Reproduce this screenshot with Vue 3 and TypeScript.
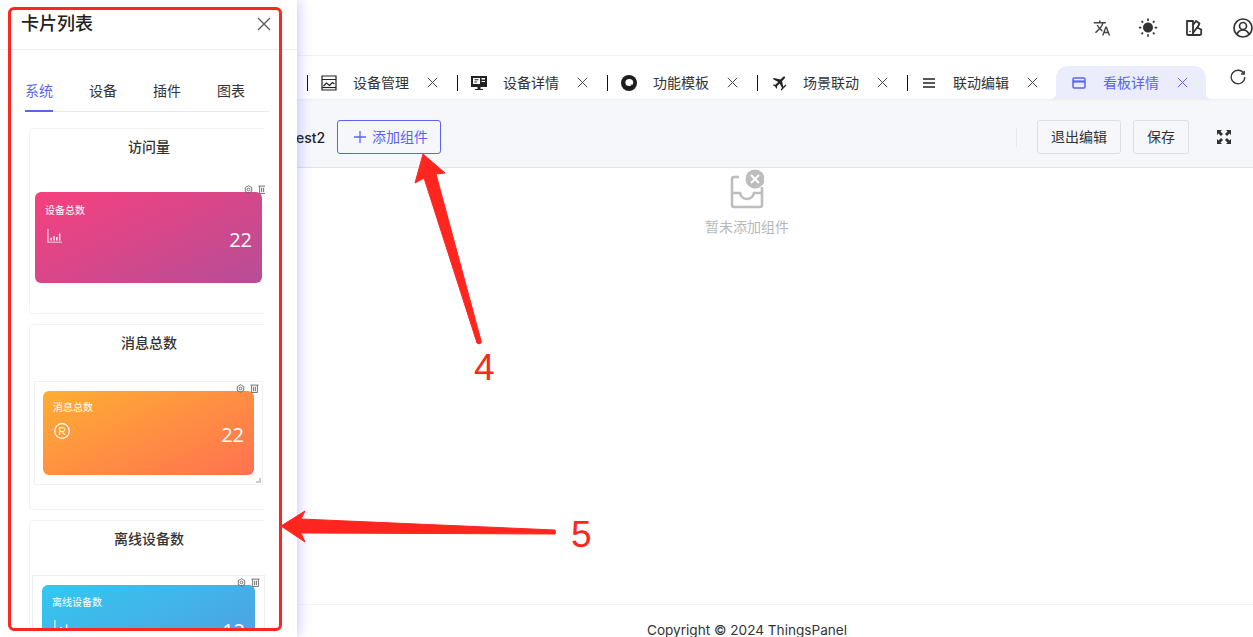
<script setup lang="ts">
interface Tab { name: string; icon: string; active?: boolean }
const tabs: Tab[] = [
  { name: '设备管理', icon: 'chart' },
  { name: '设备详情', icon: 'monitor' },
  { name: '功能模板', icon: 'ring' },
  { name: '场景联动', icon: 'plane' },
  { name: '联动编辑', icon: 'menu' },
  { name: '看板详情', icon: 'card', active: true }
]
const drawerTabs = ['系统', '设备', '插件', '图表']
interface Card { title: string; label: string; value: string; icon: string; kind: string }
const cards: Card[] = [
  { title: '访问量', label: '设备总数', value: '22', icon: 'bars', kind: 'one' },
  { title: '消息总数', label: '消息总数', value: '22', icon: 'reg', kind: 'two' },
  { title: '离线设备数', label: '离线设备数', value: '12', icon: 'bars', kind: 'three' }
]
</script>

<template>
  <div class="page">
    <div class="layout">
      <aside class="side"></aside>
      <main class="main">
        <header class="top">
          <svg class="ti" viewBox="0 0 24 24"><path fill="#444" d="M12.87 15.07l-2.54-2.51.03-.03A17.52 17.52 0 0 0 14.07 6H17V4h-7V2H8v2H1v2h11.17C11.5 7.92 10.44 9.75 9 11.35 8.07 10.32 7.3 9.19 6.69 8h-2c.73 1.63 1.73 3.17 2.98 4.56l-5.09 5.02L4 19l5-5 3.11 3.11.76-2.04zM18.5 10h-2L12 22h2l1.12-3h4.75L21 22h2l-4.5-12zm-2.62 7l1.62-4.33L19.12 17h-3.24z"/></svg>
          <svg class="ti sun" viewBox="0 0 24 24"><path fill="#333" d="M6.76 4.84l-1.8-1.79-1.41 1.41 1.79 1.79 1.42-1.41zM4 10.5H1v2h3v-2zm9-9.95h-2V3.5h2V.55zm7.45 3.91l-1.41-1.41-1.79 1.79 1.41 1.41 1.79-1.79zm-3.21 13.7l1.79 1.8 1.41-1.41-1.8-1.79-1.4 1.4zM20 10.5v2h3v-2h-3zm-8-5c-3.31 0-6 2.69-6 6s2.69 6 6 6 6-2.69 6-6-2.69-6-6-6zm-1 16.95h2V19.5h-2v2.95zm-7.45-3.91l1.41 1.41 1.79-1.8-1.41-1.41-1.79 1.8z"/></svg>
          <svg class="ti" viewBox="0 0 18 18" fill="none" stroke="#333" stroke-width="1.8" stroke-linejoin="round"><path d="M2 2h6v14H3a1 1 0 0 1-1-1z"/><path d="M8 6l3-4 3.5 2.5L12 9.5 M8 16h7a1.2 1.2 0 0 0 1.2-1.2V10.500L12 8.500 L8 14"/><circle cx="5" cy="12.500" r="0.800" fill="#333" stroke="none"/></svg>
          <svg class="ti user" viewBox="0 0 20 20" fill="none" stroke="#333" stroke-width="1.700"><circle cx="10" cy="10" r="9"/><circle cx="10" cy="8" r="3.500"/><path d="M4 16.500c1-3 3.500-4.500 6-4.500s5 1.500 6 4.500"/></svg>
        </header>

        <nav class="tabs">
          <div v-for="t in tabs" :key="t.name" class="tab" :class="{ active: t.active }">
            <span class="tab-icon">
              <svg v-if="t.icon === 'chart'" viewBox="0 0 16 16" fill="none" stroke="#222" stroke-width="1.200"><path d="M1 1h14v14H1z M1 4.500h14"/><path d="M2.500 11l3-3 3 2.500 3-3 2 1.500"/><path d="M1 12.500h14"/></svg>
              <svg v-else-if="t.icon === 'monitor'" viewBox="0 0 16 16"><path fill="#222" d="M0 1h16v11H0z"/><path fill="#fff" d="M2 3h7v6H2z M10.500 3H14v1.500h-3.500z M10.500 6H14v1h-3.500z"/><path fill="#222" d="M3.500 4.200h4v1h-4z M3.500 6.500h2.500v1H3.500z M6.500 12h3v2H12v1H4v-1h2.500z"/></svg>
              <svg v-else-if="t.icon === 'ring'" viewBox="0 0 16 16"><circle cx="8" cy="8" r="8" fill="#1d1d1f"/><ellipse cx="8.300" cy="7.600" rx="3.900" ry="3.500" fill="#fff"/><path d="M9.500 9.500l4.500.5-2 3z" fill="#1d1d1f"/></svg>
              <svg v-else-if="t.icon === 'plane'" viewBox="0 0 16 16"><path fill="#222" transform="translate(-1 -1) scale(.72)" d="M20.560 3.910C21.150 4.500 21.150 5.450 20.560 6.030L16.670 9.920L18.790 19.110L17.380 20.530L13.500 13.100L9.600 17L9.960 19.470L8.890 20.530L7.130 17.350L3.940 15.580L5 14.500L7.500 14.870L11.370 11L3.940 7.090L5.360 5.680L14.550 7.800L18.440 3.910C19 3.330 20 3.330 20.560 3.910Z"/><path d="M10 15l5-5" stroke="#222" stroke-width="1.300"/></svg>
              <svg v-else-if="t.icon === 'menu'" viewBox="0 0 16 16"><path d="M2 4h12M2 8h12M2 12h12" stroke="#222" stroke-width="1.400"/></svg>
              <svg v-else viewBox="0 0 16 16" fill="none" stroke="#5b63f5" stroke-width="1.500"><rect x="2" y="3" width="12" height="10" rx="1.200"/><path d="M2 6.500h12" stroke-width="2.200"/></svg>
            </span>
            <span class="tab-name">{{ t.name }}</span>
            <svg class="tab-x" viewBox="0 0 11 11"><path d="M.8.800l9.400 9.400M10.200.800L.8 10.200" stroke="currentColor" stroke-width="1"/></svg>
          </div>
          <svg class="refresh" viewBox="0 0 16 16" fill="none" stroke="#333" stroke-width="1.300"><path d="M13.800 4.500A6.800 6.800 0 1 0 14.800 8"/><path d="M14.200 1.800v3.200H11" stroke-width="1.300"/></svg>
        </nav>

        <section class="bar">
          <span class="bar-name">Test2</span>
          <button class="btn primary"><svg class="plus" viewBox="0 0 12 12"><path d="M6 0v12M0 6h12" stroke="#5b63f5" stroke-width="1.300"/></svg>添加组件</button>
          <span class="grow"></span>
          <span class="rule"></span>
          <button class="btn exit">退出编辑</button>
          <button class="btn save">保存</button>
          <svg class="full" viewBox="0 0 16 16" fill="#333"><path d="M1 1h5L4.500 2.500 7 5 5 7 2.500 4.500 1 6z M15 1v5L13.500 4.500 11 7 9 5l2.500-2.500L10 1z M1 15v-5l1.500 1.500L5 9l2 2-2.500 2.500L6 15z M15 15h-5l1.500-1.500L9 11l2-2 2.500 2.500L15 10z"/></svg>
        </section>

        <section class="empty">
          <svg class="empty-icon" viewBox="0 0 34 40" fill="none">
            <path d="M9 8H4a2 2 0 0 0-2 2v26a2 2 0 0 0 2 2h26a2 2 0 0 0 2-2V18" stroke="#bdbdbd" stroke-width="2.600"/>
            <path d="M2 24h8c1 4 3.500 6 7 6s6-2 7-6h8" stroke="#bdbdbd" stroke-width="2.600"/>
            <circle cx="25" cy="10" r="9.500" fill="#bdbdbd"/>
            <path d="M21 6l8 8M29 6l-8 8" stroke="#fff" stroke-width="2"/>
          </svg>
          <p class="empty-text">暂未添加组件</p>
        </section>

        <footer class="foot">Copyright © 2024 ThingsPanel</footer>
      </main>
    </div>

    <aside class="drawer">
      <div class="drawer-head">
        <h2>卡片列表</h2>
        <svg class="close" viewBox="0 0 14 14"><path d="M1 1l12 12M13 1L1 13" stroke="#555" stroke-width="1.200"/></svg>
      </div>
      <div class="drawer-tabs">
        <span v-for="(d, i) in drawerTabs" :key="d" class="dt" :class="{ on: i === 0 }">{{ d }}</span>
      </div>
      <div class="list">
        <article v-for="c in cards" :key="c.title" class="card" :class="c.kind">
          <h3>{{ c.title }}</h3>
          <div class="frame">
            <div class="widget">
              <div class="acts">
                <svg viewBox="0 0 10 10" fill="none" stroke="#666" stroke-width="1"><path d="M5 .8l3.600 2.100v4.200L5 9.200 1.400 7.100V2.900z"/><circle cx="5" cy="5" r="1.500"/></svg>
                <svg viewBox="0 0 10 10" fill="none" stroke="#666" stroke-width="1"><path d="M.5 1.200h9M1.800 1.200v8.300h6.400V1.200M4 3v5M6 3v5"/></svg>
              </div>
              <div class="w-label">{{ c.label }}</div>
              <div class="w-row">
                <svg v-if="c.icon === 'bars'" class="w-icon bars" viewBox="0 0 16 16" preserveAspectRatio="none" fill="none" stroke="#fff"><path d="M1 0v15h15" stroke-width="1.100"/><path d="M4.500 13v-3M7.500 13V8M10.500 13V9M13.500 13V5" stroke-width="1.500"/></svg>
                <svg v-else class="w-icon" viewBox="0 0 16 16" fill="none" stroke="#fff"><circle cx="8" cy="8" r="7.300" stroke-width="1.200"/><text x="8" y="11.500" text-anchor="middle" font-size="10" fill="#fff" stroke="none" font-family="Liberation Sans, sans-serif">R</text></svg>
                <span class="w-value">{{ c.value }}</span>
              </div>
            </div>
            <span class="grip"></span>
          </div>
        </article>
      </div>
    </aside>

    <svg class="arrows" viewBox="0 0 1253 637">
      <path fill="#ff2620" stroke="#ff2620" stroke-linejoin="round" stroke-width="1" d="M423 154L445 173L436 174L481.500 342.500Q479 345 477 343L424 178L415 183Z"/>
      <path fill="#ff2620" stroke="#ff2620" stroke-linejoin="round" stroke-width="1" d="M281 526L305 511L301 519L555 530Q556 532 555 534L301 533L305 542Z"/>
    </svg>
    <div class="mark"></div>
    <span class="num four">4</span>
    <span class="num five">5</span>
  </div>
</template>

<style>
html, body { margin: 0; background: #fff; }
</style>

<style scoped>
.page { position: relative; width: 1253px; height: 637px; overflow: hidden; background: #fff; color: #333; font-family: Inter, "Noto Sans CJK SC", sans-serif; font-size: 14px; }
.layout { display: flex; height: 100%; }
.side { width: 241px; flex: none; }
.main { flex: 1; min-width: 0; display: flex; flex-direction: column; height: 100%; }

.top { height: 55px; flex: none; border-bottom: 1px solid #f1f2f6; display: flex; align-items: center; justify-content: flex-end; gap: 28px; }
.ti { width: 18px; height: 18px; }
.ti.sun { width: 20px; height: 20px; margin: 0 -1px; }
.ti.user { width: 20px; height: 20px; margin-left: 2px; }

.tabs { height: 43px; flex: none; display: flex; align-items: flex-end; padding-left: 66px; position: relative; z-index: 1; box-shadow: 0 1px 2px rgba(0, 0, 0, .04); }
.tab { width: 150px; height: 33px; flex: none; box-sizing: border-box; display: flex; align-items: center; position: relative; padding-left: 14px; color: #333; }
.tab::before { content: ""; position: absolute; left: 0; top: 9px; height: 16px; width: 1px; background: #111; }
.tab-icon { width: 16px; height: 16px; display: flex; }
.tab-icon svg { width: 16px; height: 16px; }
.tab-name { margin-left: 16px; width: 56px; flex: none; line-height: 20px; white-space: nowrap; }
.tab-x { width: 11px; height: 11px; margin-left: 18px; color: #444; }
.tab.active { background: #ebedfd; color: #5b63f5; border-radius: 12px 12px 0 0; margin-left: -1px; padding-left: 15px; }
.tab.active .tab-x { color: #5b63f5; }
.tab.active::before { left: -6px; top: auto; bottom: 0; width: 6px; height: 6px; background: radial-gradient(circle at 0 0, transparent 6px, #ebedfd 6.500px); }
.tab.active::after { content: ""; position: absolute; right: -6px; bottom: 0; width: 6px; height: 6px; background: radial-gradient(circle at 100% 0, transparent 6px, #ebedfd 6.500px); }
.refresh { width: 16px; height: 16px; margin: 0 0 14px 24px; flex: none; }

.bar { height: 69px; flex: none; box-sizing: border-box; display: flex; align-items: center; background: #f5f7fb; border-bottom: 1px solid #e0e3ea; padding: 8px 21px 0 47px; }
.bar-name { font-weight: 500; color: #222; width: 38px; flex: none; margin-right: 11px; white-space: nowrap; }
.grow { flex: 1; }
.btn { height: 34px; box-sizing: border-box; border-radius: 3px; font: inherit; line-height: 32px; padding: 0; background: transparent; border: 1px solid #dcdfe6; color: #333; flex: none; }
.btn.primary { width: 104px; padding-left: 4px; border-color: #5b63f5; color: #5b63f5; }
.plus { width: 12px; height: 12px; margin-right: 6px; vertical-align: -1px; }
.rule { width: 1px; height: 19px; background: #e6e8ee; margin-right: 20px; }
.btn.exit { width: 84px; margin-right: 12px; }
.btn.save { width: 56px; margin-right: 27px; }
.full { width: 16px; height: 16px; flex: none; }

.empty { flex: 1; display: flex; flex-direction: column; align-items: center; padding-top: 1px; }
.empty-icon { width: 34px; height: 40px; }
.empty-text { margin: 8px 0 0; color: #b8b8b8; line-height: 20px; }

.foot { height: 33px; flex: none; box-sizing: border-box; border-top: 1px solid #f3f3f6; padding-top: 18px; text-align: center; font-size: 13.6px; line-height: 14px; color: #333; white-space: nowrap; }

.drawer { position: absolute; left: 0; top: 0; width: 297px; height: 637px; background: #fff; display: flex; flex-direction: column; box-shadow: 2px 0 12px rgba(95, 80, 255, .3); z-index: 2; }
.drawer-head { height: 49px; flex: none; box-sizing: content-box; border-bottom: 1px solid #eeeff2; display: flex; align-items: center; justify-content: space-between; padding: 0 26px 0 21px; }
.drawer-head h2 { margin: 0; font-size: 18px; font-weight: 500; color: #222; line-height: 28px; position: relative; top: -1px; }
.close { width: 14px; height: 14px; margin-top: -1px; }
.drawer-tabs { margin: 30px 28px 0 25px; display: flex; gap: 36px; border-bottom: 1px solid #e9eaee; height: 31px; flex: none; }
.dt { width: 28px; height: 32px; box-sizing: border-box; line-height: 22px; color: #333; white-space: nowrap; }
.dt.on { color: #5b63f5; border-bottom: 2px solid #5b63f5; }

.list { flex: 1; min-height: 0; margin: 16px 32px 6px 29px; overflow: hidden; display: flex; flex-direction: column; gap: 10px; }
.card { width: 240px; height: 186px; flex: none; box-sizing: border-box; border: 1px solid #f2f3f5; border-radius: 4px; padding-top: 8px; }
.card h3 { margin: 0; font-size: 14px; font-weight: 500; line-height: 20px; text-align: center; color: #333; }
.frame { position: relative; box-sizing: border-box; }
.widget { position: relative; color: #fff; border-radius: 6px; box-sizing: border-box; }
.acts { position: absolute; right: -5px; top: -7px; display: flex; gap: 5px; }
.acts svg { width: 9px; height: 9px; }
.w-label { font-size: 10px; line-height: 14px; white-space: nowrap; }
.w-row { display: flex; justify-content: space-between; align-items: flex-start; }
.w-icon { width: 16px; height: 16px; margin-left: 1px; }
.w-icon.bars { width: 15px; height: 14px; margin-left: 2px; margin-top: 2px; }
.w-value { font-family: "Open Sans", sans-serif; font-size: 20px; line-height: 26px; }
.grip { display: none; }

.one .frame { margin: 35px 0 0 5px; width: 227px; }
.one .widget { height: 91px; padding: 11px 10px; background: linear-gradient(155deg, #f7407d, #b64e97); }
.one .w-row { margin-top: 10px; }
.two .frame { margin: 28px 0 0 4px; width: 229px; height: 104px; border: 1px solid #f0f1f4; padding: 9px 8px; }
.two .widget { height: 84px; padding: 9px 10px; background: linear-gradient(155deg, #ffae33, #ff7151); }
.two .w-row { margin-top: 8px; }
.two .w-icon { margin-top: 1px; }
.two .grip { display: block; position: absolute; right: 1px; bottom: 1px; width: 5px; height: 5px; border-right: 2px solid #ccc; border-bottom: 2px solid #ccc; box-sizing: border-box; }
.three .frame { margin: 26px 0 0 2px; width: 233px; height: 120px; border: 1px solid #eceef1; padding: 9px; }
.three .widget { height: 92px; padding: 10px; background: linear-gradient(155deg, #33c8f0, #5598de); }
.three .w-row { margin-top: 9px; }

.arrows { position: absolute; left: 0; top: 0; width: 1253px; height: 637px; z-index: 3; pointer-events: none; }
.mark { position: absolute; left: 8px; top: 7px; width: 274px; height: 624px; box-sizing: border-box; border: 3px solid #ff2620; border-radius: 6px; z-index: 3; }
.num { position: absolute; z-index: 3; color: #ff2620; font-family: "Liberation Sans", sans-serif; font-size: 37px; line-height: 40px; }
.four { left: 474px; top: 348px; }
.five { left: 571px; top: 515px; }
</style>
